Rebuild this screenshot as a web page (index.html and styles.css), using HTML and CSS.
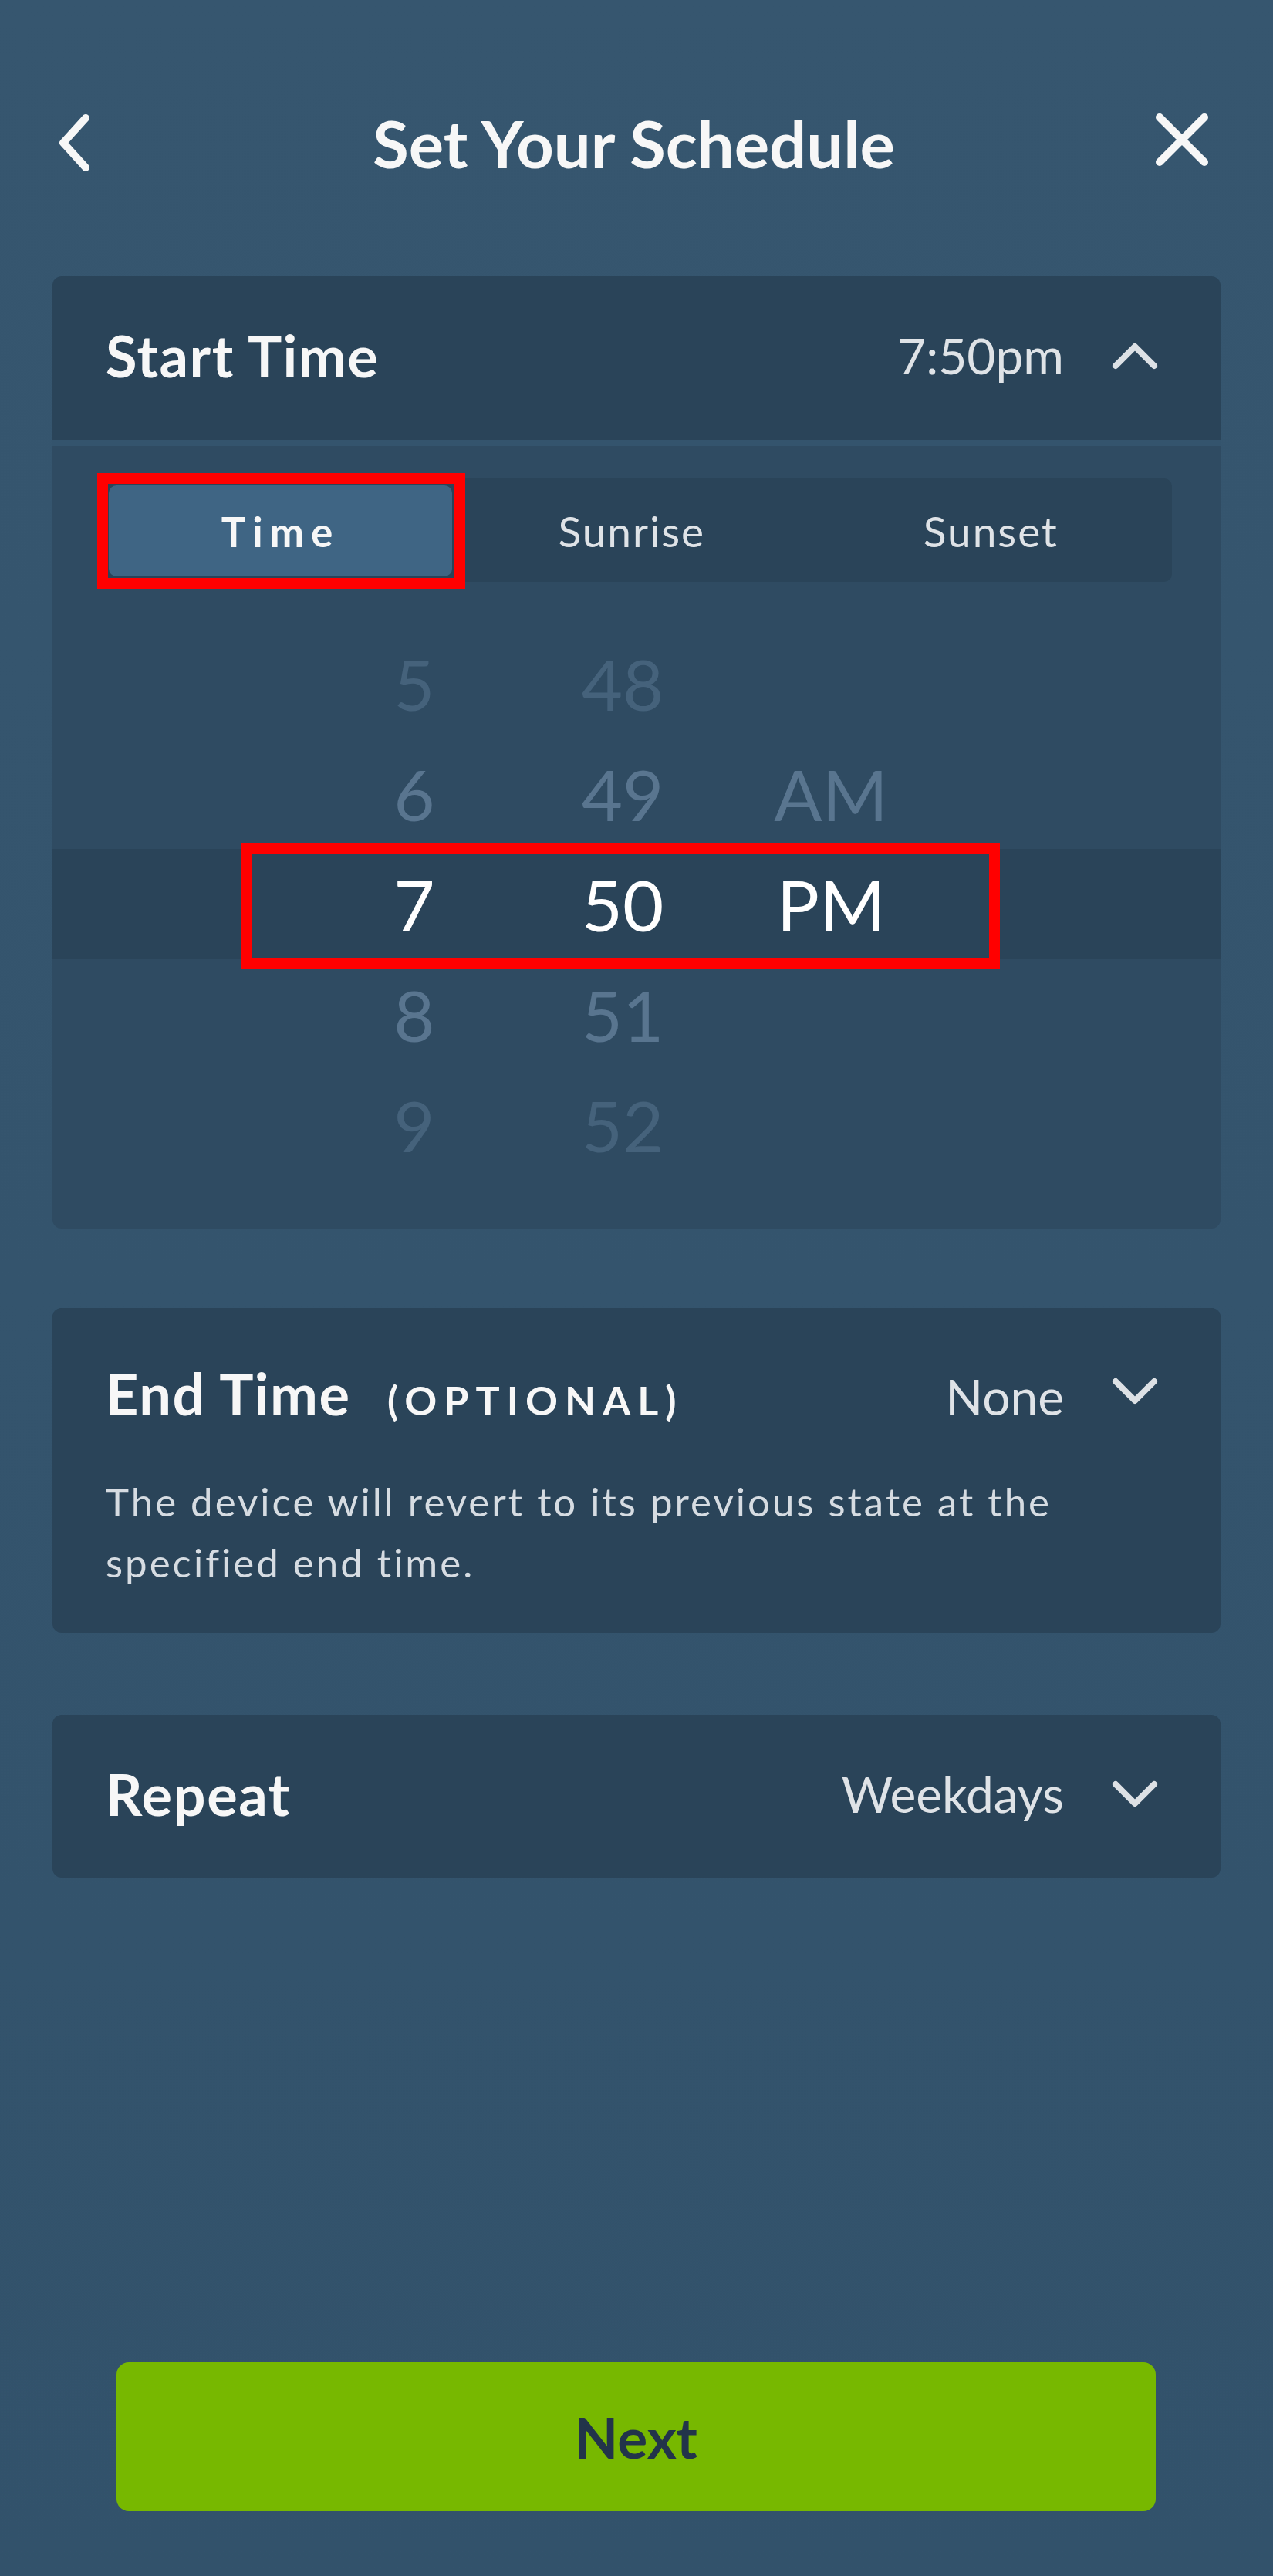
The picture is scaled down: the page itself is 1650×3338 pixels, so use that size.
FILE: index.html
```html
<!DOCTYPE html>
<html lang="en">
<head>
  <meta charset="UTF-8" />
  <meta name="viewport" content="width=device-width, initial-scale=1.0" />
  <title>Set Your Schedule</title>
  <link rel="stylesheet" href="styles.css">
</head>
<body>
  <div class="screen">
    <header class="topbar">
      <button class="icon-btn back" aria-label="Back">
        <svg width="48" height="76" viewBox="0 0 48 76"><path d="M38 6 L9 38 L38 70" /></svg>
      </button>
      <h1>Set Your Schedule</h1>
      <button class="icon-btn close" aria-label="Close">
        <svg width="76" height="76" viewBox="0 0 76 76"><path d="M9 9 L67 67 M67 9 L9 67" /></svg>
      </button>
    </header>

    <section class="card start">
      <div class="card-head">
        <span class="card-title">Start Time</span>
        <span class="card-value">7:50pm</span>
        <svg class="chev" width="60" height="36" viewBox="0 0 60 36"><path d="M5 31 L30 6 L55 31" /></svg>
      </div>
      <div class="card-body">
        <div class="segments">
          <div class="seg active">Time</div>
          <div class="seg">Sunrise</div>
          <div class="seg">Sunset</div>
        </div>
        <div class="picker">
          <div class="picker-row far"><span>5</span><span>48</span><span></span></div>
          <div class="picker-row near"><span>6</span><span>49</span><span>AM</span></div>
          <div class="picker-row current"><span>7</span><span>50</span><span>PM</span></div>
          <div class="picker-row near"><span>8</span><span>51</span><span></span></div>
          <div class="picker-row far"><span>9</span><span>52</span><span></span></div>
        </div>
      </div>
    </section>

    <section class="card end">
      <div class="card-head tall">
        <span class="card-title">End Time <small>(OPTIONAL)</small></span>
        <span class="card-value">None</span>
        <svg class="chev down" width="60" height="36" viewBox="0 0 60 36"><path d="M5 5 L30 30 L55 5" /></svg>
      </div>
      <p class="note">The device will revert to its previous state at the specified end time.</p>
    </section>

    <section class="card repeat">
      <div class="card-head">
        <span class="card-title">Repeat</span>
        <span class="card-value">Weekdays</span>
        <svg class="chev" width="60" height="36" viewBox="0 0 60 36"><path d="M5 5 L30 30 L55 5" /></svg>
      </div>
    </section>

    <div class="spacer"></div>
    <button class="next">Next</button>
  </div>
</body>
</html>
```

FILE: styles.css
```css
body {
  margin: 0;
  font-family: 'Lato', 'Noto Sans', sans-serif;
  background: linear-gradient(#36566f, #32526b);
  color: #f6f7f8;
}

.screen {
  min-height: 3338px;
  display: flex;
  flex-direction: column;
}

/* top bar */
.topbar {
  height: 346px;
  padding: 12px 80px 0 73px;
  display: grid;
  grid-template-columns: 1fr auto 1fr;
  align-items: center;
}

.topbar h1 {
  margin: 0;
  font-size: 85px;
  font-weight: 700;
  color: #f7f7f7;
}

.icon-btn {
  background: none;
  border: none;
  padding: 0;
  display: flex;
}

.icon-btn svg path {
  fill: none;
  stroke: #f7f7f7;
  stroke-width: 10;
  stroke-linecap: round;
  stroke-linejoin: round;
}

.icon-btn.close {
  justify-self: end;
  margin-top: -8px;
}

/* cards */
.card {
  margin: 0 68px;
  border-radius: 12px;
  overflow: hidden;
  background: #2a4459;
}

.card.start {
  display: flex;
  flex-direction: column;
  gap: 8px;
  background: #34546d;
}

.card.end {
  margin-top: 103px;
  padding-bottom: 52px;
}

.card.repeat {
  margin-top: 106px;
}

.card-head {
  height: 212px;
  box-sizing: border-box;
  padding: 0 0 6px 69px;
  display: flex;
  align-items: center;
  background: #2a4459;
}

.card.repeat .card-head {
  height: 211px;
}

.card-head.tall {
  height: auto;
  padding: 67px 0 0 69px;
}

.card-title {
  flex: 1;
  font-size: 74px;
  font-weight: 700;
  letter-spacing: 1.5px;
  line-height: 88px;
  color: #f7f7f7;
}

.card-title small {
  margin-left: 28px;
  font-size: 52px;
  font-weight: 700;
  letter-spacing: 9px;
}

.card-value {
  font-size: 64px;
  line-height: 88px;
  color: #dfe3e7;
}

.chev {
  margin: 0 81px 0 62px;
}

.chev.down {
  margin-bottom: 14px;
}

.chev path {
  fill: none;
  stroke: #dde1e5;
  stroke-width: 8;
  stroke-linecap: round;
  stroke-linejoin: round;
}

.note {
  margin: 48px 200px 0 69px;
  font-size: 51px;
  letter-spacing: 3px;
  line-height: 79px;
  color: #d6dce2;
}

/* start time body */
.card-body {
  background: #2f4b62;
  padding: 42px 0 63px;
}

.segments {
  margin: 0 63px 0 71px;
  height: 134px;
  box-sizing: border-box;
  padding: 9px 2px 7px;
  border-radius: 10px;
  background: #2a4459;
  display: grid;
  grid-template-columns: 445px 1fr 1fr;
}

.seg {
  display: flex;
  align-items: center;
  justify-content: center;
  font-size: 55px;
  letter-spacing: 2px;
  color: #dfe3e7;
}

.seg.active {
  position: relative;
  background: #3f6584;
  border-radius: 10px;
  font-size: 53px;
  font-weight: 700;
  letter-spacing: 9px;
  color: #f7f7f7;
}

.seg.active::after {
  content: '';
  position: absolute;
  inset: -16px -17px -16px -15px;
  border: 14px solid #ff0000;
}

.picker {
  margin-top: 60px;
}

.picker-row {
  height: 143px;
  display: flex;
  justify-content: center;
  align-items: center;
  padding-right: 36px;
  font-size: 92px;
  line-height: 143px;
  position: relative;
}

.picker-row span {
  width: 270px;
  text-align: center;
}

.picker-row.far {
  color: #45627b;
}

.picker-row.near {
  color: #59758f;
}

.picker-row.current {
  background: #2a4459;
  color: #ffffff;
}

.picker-row.current::after {
  content: '';
  position: absolute;
  left: 245px;
  right: 286px;
  top: -7px;
  bottom: -12px;
  border: 14px solid #ff0000;
}

/* bottom button */
.spacer {
  flex: 1;
}

.next {
  margin: 0 152px 84px 151px;
  height: 193px;
  border: none;
  border-radius: 16px;
  background: #77b800;
  font-family: 'Lato', sans-serif;
  font-size: 73px;
  font-weight: 700;
  color: #22344a;
}
```
